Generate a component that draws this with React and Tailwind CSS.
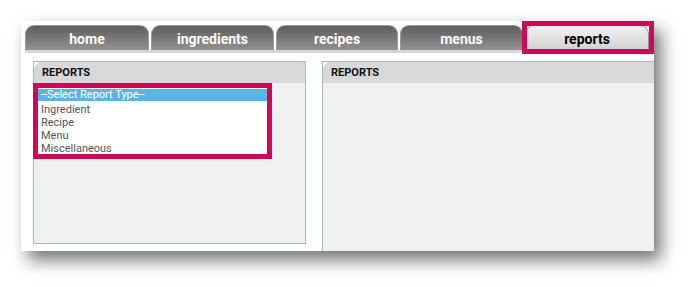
import React from "react";

const tabs = ["home", "ingredients", "recipes", "menus"];
const tabW = ["w-[124px]", "w-[123px]", "w-[122px]", "w-[123px]"];

function Panel({ className, children }) {
  return (
    <div className={"relative bg-[#f0f0f0] border-[#a9b5c9] " + className}>
      <div className="h-[21px] bg-[#d8d8d8] flex items-center pl-[8px] pt-[1px] text-[11px] font-bold text-[#111]">
        REPORTS
      </div>
      <div className="absolute left-0 top-0 w-0 h-0 border-t-[5px] border-r-[5px] border-t-white border-r-transparent" />
      {children}
    </div>
  );
}

export default function App() {
  return (
    <div className="w-[696px] h-[287px] bg-white pt-[21px] pl-[21px]" style={{ fontFamily: "Roboto, 'Liberation Sans', sans-serif" }}>
      <div className="relative w-[633px] h-[230px] bg-white shadow-[7px_9px_16px_rgba(0,0,0,0.55)]">
        <div className="flex gap-[2px] pl-[4px] pt-[4px]">
          {tabs.map((t, i) => (
            <div
              key={t}
              className={tabW[i] + " h-[25px] pt-[2px] rounded-t-[9px] border border-b-0 border-[#9a9a9a] bg-gradient-to-b from-[#5e5e5e] to-[#929292] flex items-center justify-center text-white font-bold text-[14px]"}
            >
              {t}
            </div>
          ))}
          <div className="w-[124px] h-[25px] pt-[2px] rounded-t-[9px] border border-b-0 border-[#9a9a9a] bg-gradient-to-b from-[#f2f2f2] to-[#d2d2d2] flex items-center justify-center text-black font-bold text-[14px]">
            reports
          </div>
        </div>
        <div className="mx-[4px] h-[3px] bg-[#d6d6d6]" />
        <div className="flex items-start mt-[8px] pl-[12px] gap-[16px]">
          <Panel className="w-[273px] h-[183px] border">
            <div className="ml-[4px] mt-[5px] w-[229px] h-[66px] bg-white pt-[1px] text-[11px] leading-[13px] text-[#555]">
              <div className="bg-[#5bb4e2] text-white pl-[3px] h-[12px] leading-[12px] mb-[2px]">--Select Report Type--</div>
              <div className="pl-[3px]">Ingredient</div>
              <div className="pl-[3px]">Recipe</div>
              <div className="pl-[3px]">Menu</div>
              <div className="pl-[3px]">Miscellaneous</div>
            </div>
          </Panel>
          <Panel className="flex-1 h-[190px] border-l border-t" />
        </div>
        <div className="absolute left-[501px] top-0 w-[132px] h-[33px] border-[5px] border-[#cc0a55]" />
        <div className="absolute left-[12px] top-[62px] w-[239px] h-[76px] border-[5px] border-[#cc0a55]" />
      </div>
    </div>
  );
}
